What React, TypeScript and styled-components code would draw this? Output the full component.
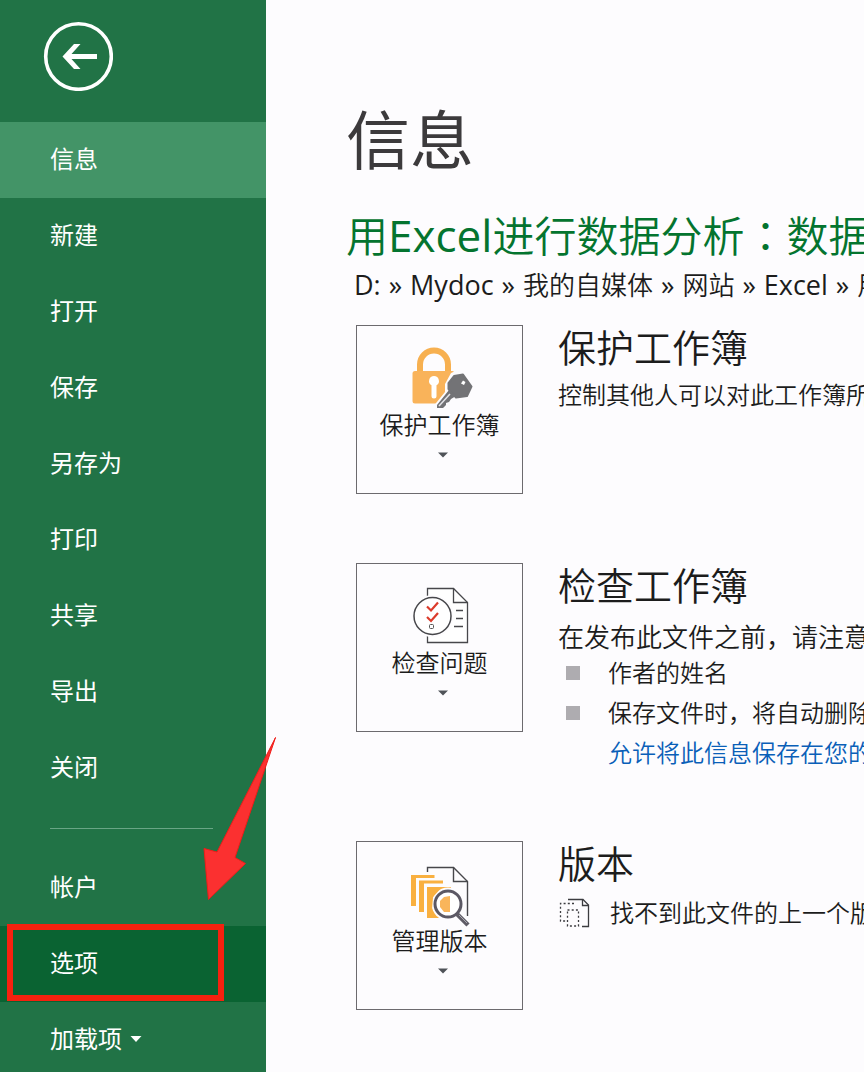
import React from "react";
import styled, { createGlobalStyle } from "styled-components";

const GlobalStyle = createGlobalStyle`
  * { box-sizing: border-box; }
  body {
    margin: 0;
    background: #fdfcfe;
    color: #1c1c1c;
    font-family: "Open Sans", "Noto Sans CJK SC", sans-serif;
    font-weight: 350;
  }
  h1, h2, h3, p, ul { margin: 0; padding: 0; font-weight: 350; }
  button { font: inherit; color: inherit; cursor: pointer; }
`;

const Shell = styled.div`
  display: flex;
  height: 100vh;
  overflow: hidden;
`;

const Sidebar = styled.nav`
  position: relative;
  z-index: 1;
  flex: 0 0 266px;
  background: #217346;
  color: #fff;
`;

const BackButton = styled.button`
  display: block;
  margin: 21px 0 31px 43px;
  width: 70px;
  height: 70px;
  padding: 0;
  border: 0;
  background: none;
`;

const NavItem = styled.button<{ $tone?: string }>`
  display: flex;
  align-items: center;
  gap: 8px;
  width: 100%;
  height: 76px;
  padding: 0 0 2px 50px;
  border: 0;
  background: ${(p) => p.$tone ?? "transparent"};
  font-size: 24px;
  font-weight: 400;
  line-height: 32px;
  text-align: left;
`;

const Divider = styled.hr`
  width: 163px;
  height: 1px;
  margin: 22px 0 21px 50px;
  border: 0;
  background: #69a585;
`;

const Marked = styled.div`
  position: relative;
`;

const MarkBox = styled.span`
  position: absolute;
  top: -2px;
  left: 7px;
  width: 217px;
  height: 77px;
  border: 6px solid #f5210f;
  pointer-events: none;
`;

const MarkArrow = styled.svg`
  position: absolute;
  left: 200px;
  bottom: 100px;
  pointer-events: none;
`;

const Main = styled.main`
  flex: 1;
  min-width: 0;
  overflow: hidden;
  padding: 100px 0 0 80px;
  white-space: nowrap;
`;

const PageTitle = styled.h1`
  font-size: 64px;
  font-weight: 400;
  line-height: 80px;
  color: #3c3a3c;
`;

const FileTitle = styled.h2`
  margin-top: 28px;
  font-size: 42px;
  line-height: 56px;
  color: #04742f;
`;

const Latin = styled.span`
  font-size: 44px;
  font-weight: 400;
  line-height: 1;
`;

const Colon = styled.span`
  font-family: "Noto Sans CJK TC", sans-serif;
  line-height: 1;
`;

const FilePath = styled.p`
  margin: 5px 0 24px;
  padding-left: 8px;
  font-size: 26px;
  line-height: 32px;
`;

const PathLatin = styled.span`
  font-size: 27px;
  font-weight: 400;
  line-height: 1;
`;

const PathMark = styled(PathLatin)`
  margin: 0 8px;
`;

const Section = styled.section`
  display: flex;
  align-items: flex-start;
  gap: 35px;
  margin: 0 0 69px 10px;
`;

const Tile = styled.button`
  display: flex;
  flex: 0 0 167px;
  flex-direction: column;
  align-items: center;
  height: 169px;
  padding: 20px 0 0;
  border: 1px solid #6c6a6e;
  background: #fdfcfe;
  font-size: 24px;
  line-height: 32px;
`;

const TileIcon = styled.svg`
  flex: none;
  width: 64px;
  height: 63px;
  overflow: visible;
`;

const TileArrow = styled.svg`
  margin: 11px 0 0 6px;
`;

const Details = styled.div`
  flex: 1;
  min-width: 0;
`;

const SectionTitle = styled.h3`
  font-size: 38px;
  line-height: 44px;
`;

const Description = styled.p<{ $size?: number; $gap?: number }>`
  display: flex;
  align-items: center;
  gap: 20px;
  margin-top: ${(p) => p.$gap ?? 10}px;
  font-size: ${(p) => p.$size ?? 24}px;
  line-height: 32px;

  svg {
    flex: none;
  }
`;

const BulletList = styled.ul`
  list-style: none;
`;

const Bullet = styled.li`
  display: flex;
  align-items: center;
  gap: 28px;
  padding-left: 8px;
  font-size: 24px;
  line-height: 40px;

  &::before {
    content: "";
    flex: none;
    width: 14px;
    height: 14px;
    background: #aeacb0;
  }
`;

const PrivacyLink = styled.a`
  display: block;
  padding-left: 50px;
  font-size: 24px;
  line-height: 39px;
  color: #0a5fb8;
  text-decoration: none;
`;

const Caret = ({ color }: { color: string }) => (
  <svg width="12" height="6" viewBox="0 0 12 6" aria-hidden="true">
    <path d="M0.5 0h11L6 6z" fill={color} />
  </svg>
);

const LockIcon = () => (
  <TileIcon viewBox="0 0 64 63" aria-hidden="true">
    <path d="M12 27V18.500a14 14 0 0 1 28 0V27" fill="none" stroke="#f7b050" strokeWidth="6" />
    <rect x="4.500" y="25" width="42" height="32.500" rx="2.500" fill="#f9b35a" />
    <path d="M26 30a5 5 0 0 1 2.500 9.300V50a2.500 2.500 0 0 1-5 0V39.300A5 5 0 0 1 26 30z" fill="#fff" />
    <path d="M43 27L50 24 66 40 61 53 50 58 34 66 24 62 37 46V38z" fill="#fdfcfe" />
    <path d="M46 30L55 28.500 63.500 40.500 59 50 48 51.500 40.500 43 40.500 37z" fill="#737376" stroke="#737376" strokeWidth="2" strokeLinejoin="round" />
    <path d="M55 34.500L57.500 36 56 39 53 37.500z" fill="#fff" />
    <path d="M41 44L29 59V62H35L38 59V57L41 56 43 53 48 50z" fill="#737376" />
    <path d="M42 48L31 60" stroke="#e4e4e8" strokeWidth="1.500" />
  </TileIcon>
);

const InspectIcon = () => (
  <TileIcon viewBox="0 0 64 63" aria-hidden="true">
    <path d="M19.500 13V4.500H45.500L59.500 18.500V58.500H19.500V51" fill="#fff" stroke="#47474b" strokeWidth="1.300" />
    <path d="M45.500 4.500V18.500H59.500M48 26.500H55M48 34.500H55M46 42.500H55" fill="none" stroke="#47474b" strokeWidth="1.300" />
    <circle cx="24.500" cy="32" r="21" fill="#fdfcfe" />
    <circle cx="24.500" cy="32" r="18.500" fill="#fff" stroke="#47474b" strokeWidth="1.500" />
    <path d="M19 22.500L23 26.500 30 18.500M19 33L23 37 30 29" fill="none" stroke="#dc3b2b" strokeWidth="2.200" />
    <rect x="21.500" y="40.500" width="4" height="4" rx="1" fill="none" stroke="#555" />
  </TileIcon>
);

const VersionsIcon = () => (
  <TileIcon viewBox="0 0 64 63" aria-hidden="true">
    <path d="M19.500 10V5.500H45.500L59.500 19.500V54" fill="none" stroke="#47474b" strokeWidth="1.400" />
    <path d="M45.500 5.500V19.500H59.500" fill="none" stroke="#47474b" strokeWidth="1.400" />
    <path d="M3 13H26.500V16H8V44H3zM11 18.500H35V21.500H16V50H11zM19 25H43V56H19z" fill="#f9b040" />
    <circle cx="40" cy="42" r="16.500" fill="#fdfcfe" />
    <path d="M19 25H34L25 35 24 47 28 56H19z" fill="#f9b040" />
    <path d="M50 51L61 62" stroke="#fdfcfe" strokeWidth="8" />
    <circle cx="40" cy="42" r="13" fill="#fff" stroke="#5b5864" strokeWidth="3" />
    <path d="M42 34V50H36L32 45V39L36 35z" fill="#f9b55a" />
    <path d="M49 52L60 63" stroke="#5f5c66" strokeWidth="4.500" />
    <path d="M51 53L59 61" stroke="#aaa8b0" strokeWidth="1" />
  </TileIcon>
);

const NoVersionIcon = () => (
  <svg width="32" height="30" viewBox="0 0 32 30" aria-hidden="true">
    <path d="M10 1.500H25L30.500 7V28.500H24" fill="none" stroke="#3c3c40" strokeWidth="1.300" />
    <path d="M24.500 1.500V7.500H30.500" fill="none" stroke="#3c3c40" strokeWidth="1.300" />
    <path d="M16 5.500H2.500V23H8M9.500 12H20.500V28H9.500z" fill="none" stroke="#3c3c40" strokeWidth="1.300" strokeDasharray="2 2.200" />
  </svg>
);

const primaryItems = ["信息", "新建", "打开", "保存", "另存为", "打印", "共享", "导出", "关闭"];

interface CommandTileProps {
  icon: React.ReactNode;
  label: string;
}

const CommandTile = ({ icon, label }: CommandTileProps) => (
  <Tile type="button" aria-haspopup="menu">
    {icon}
    <span>{label}</span>
    <TileArrow width="10" height="6" viewBox="0 0 10 6" aria-hidden="true">
      <path d="M0 0.500H10L5 5.500z" fill="#4f5358" />
    </TileArrow>
  </Tile>
);

export default function App() {
  return (
    <Shell>
      <GlobalStyle />
      <Sidebar>
        <BackButton type="button" aria-label="返回">
          <svg width="70" height="70" viewBox="0 0 70 70" aria-hidden="true">
            <circle cx="35.500" cy="35.500" r="32.800" fill="none" stroke="#fff" strokeWidth="3.600" />
            <path d="M19.500 35.500L31 23H37.500L28.500 33H54V38H28.500L37.500 48H31z" fill="#fff" />
          </svg>
        </BackButton>
        {primaryItems.map((item, index) => (
          <NavItem key={item} type="button" $tone={index === 0 ? "#439467" : undefined}>
            {item}
          </NavItem>
        ))}
        <Divider />
        <NavItem type="button">帐户</NavItem>
        <Marked>
          <NavItem type="button" $tone="#0a6332">选项</NavItem>
          <MarkBox />
          <MarkArrow width="80" height="166" viewBox="0 0 80 166" aria-hidden="true">
            <path d="M75.500 1.500L35 121.500 45.500 127.500 8.500 163.500 4 112.500 17 116z" fill="#fb3030" stroke="#f01c18" strokeWidth="1" />
          </MarkArrow>
        </Marked>
        <NavItem type="button">
          加载项
          <Caret color="#fff" />
        </NavItem>
      </Sidebar>
      <Main>
        <PageTitle>信息</PageTitle>
        <FileTitle>
          用<Latin>Excel</Latin>进行数据分析<Colon>：</Colon>数据
        </FileTitle>
        <FilePath>
          <PathLatin>D:</PathLatin>
          <PathMark>»</PathMark>
          <PathLatin>Mydoc</PathLatin>
          <PathMark>»</PathMark>
          我的自媒体
          <PathMark>»</PathMark>
          网站
          <PathMark>»</PathMark>
          <PathLatin>Excel</PathLatin>
          <PathMark>»</PathMark>
          用
        </FilePath>
        <Section>
          <CommandTile icon={<LockIcon />} label="保护工作簿" />
          <Details>
            <SectionTitle>保护工作簿</SectionTitle>
            <Description>控制其他人可以对此工作簿所</Description>
          </Details>
        </Section>
        <Section>
          <CommandTile icon={<InspectIcon />} label="检查问题" />
          <Details>
            <SectionTitle>检查工作簿</SectionTitle>
            <Description $size={26} $gap={14}>在发布此文件之前，请注意</Description>
            <BulletList>
              <Bullet>作者的姓名</Bullet>
              <Bullet>保存文件时，将自动删除</Bullet>
            </BulletList>
            <PrivacyLink href="#privacy">允许将此信息保存在您的</PrivacyLink>
          </Details>
        </Section>
        <Section>
          <CommandTile icon={<VersionsIcon />} label="管理版本" />
          <Details>
            <SectionTitle>版本</SectionTitle>
            <Description $gap={12}>
              <NoVersionIcon />
              找不到此文件的上一个版
            </Description>
          </Details>
        </Section>
      </Main>
    </Shell>
  );
}
